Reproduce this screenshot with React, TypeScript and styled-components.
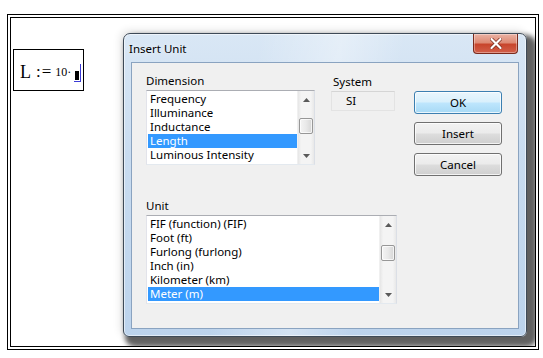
import React from "react";
import styled, { createGlobalStyle } from "styled-components";

const Global = createGlobalStyle`
  html, body { margin: 0; padding: 0; background: #ffffff; }
  body { width: 543px; height: 358px; overflow: hidden; }
  * { box-sizing: border-box; }
`;

const Frame = styled.div`
  margin: 14px 0 0 7px;
  width: 532px;
  height: 336px;
  border: 1px solid #000;
  padding: 2px;
`;

const Sheet = styled.div`
  height: 100%;
  border: 1px solid #000;
  display: flex;
  align-items: flex-start;
  overflow: hidden;
  background: #fff;
`;

const MathBox = styled.div`
  margin: 31px 0 0 2px;
  width: 71px;
  height: 42px;
  border: 1px solid #000;
  display: flex;
  align-items: center;
  padding: 4px 0 0 6px;
  font-family: "Liberation Serif", serif;
  color: #000;
`;

const MathBig = styled.span`
  font-size: 18px;
  line-height: 18px;
`;

const MathSmall = styled.span`
  font-size: 12px;
  line-height: 18px;
  margin-left: 3px;
`;

const Assign = styled.span`
  font-size: 17px;
  line-height: 18px;
  margin-left: 5px;
  letter-spacing: 1px;
`;

const CursorWrap = styled.span`
  display: inline-flex;
  align-items: flex-end;
  margin-left: 3px;
  height: 18px;
  border-right: 1.5px solid #3b3bd6;
  border-bottom: 1.5px solid #3b3bd6;
  padding: 0 1px 1px 1px;
  margin-top: 2px;
`;

const CursorBlock = styled.span`
  display: block;
  width: 4px;
  height: 9px;
  background: #000;
`;

const Window = styled.div`
  margin: 15px 0 0 39px;
  width: 404px;
  height: 304px;
  border: 1px solid #3e4a57;
  border-radius: 7px 7px 6px 6px;
  background:
    linear-gradient(100deg, rgba(255,255,255,0.0) 30%, rgba(255,255,255,0.35) 48%, rgba(255,255,255,0) 62%),
    linear-gradient(180deg, #d9e7f5 0%, #c9dcf0 40%, #bcd3ec 100%);
  box-shadow:
    6px 6px 5px 4px rgba(0, 0, 0, 0.62),
    -2px -2px 8px rgba(0, 0, 0, 0.12),
    inset 0 0 0 1px rgba(255,255,255,0.55);
  display: flex;
  flex-direction: column;
  padding: 0 7px 7px 7px;
`;

const TitleBar = styled.div`
  height: 28px;
  display: flex;
  align-items: flex-start;
  justify-content: space-between;
`;

const TitleText = styled.div`
  font-family: "Noto Sans", "Open Sans", sans-serif;
  font-size: 11.5px;
  color: #000;
  margin: 7px 0 0 -2px;
  text-shadow: 0 0 6px rgba(255,255,255,0.9);
`;

const CloseButton = styled.div`
  width: 45px;
  height: 20px;
  margin-right: 1px;
  border: 1px solid #7a2a1c;
  border-top: none;
  border-radius: 0 0 4px 4px;
  background: linear-gradient(180deg, #eab2a4 0%, #de8a74 45%, #c8452c 55%, #d2604a 100%);
  box-shadow: inset 0 0 0 1px rgba(255,255,255,0.35);
  display: flex;
  align-items: center;
  justify-content: center;
`;

const Client = styled.div`
  flex: 1;
  border: 1px solid #8aa3c0;
  background: #f0f0f0;
  padding: 11px 0 0 14px;
  font-family: "Noto Sans", "Open Sans", sans-serif;
  font-size: 11.5px;
  color: #000;
`;

const TopSection = styled.div`
  display: flex;
  align-items: flex-start;
`;

const Column = styled.div<{ $w: number; $ml?: number; $mt?: number }>`
  width: ${(p) => p.$w}px;
  margin-left: ${(p) => p.$ml ?? 0}px;
  margin-top: ${(p) => p.$mt ?? 0}px;
  display: flex;
  flex-direction: column;
`;

const Label = styled.div<{ $ml?: number }>`
  height: 14px;
  line-height: 14px;
  margin: 0 0 2px ${(p) => p.$ml ?? 0}px;
  white-space: nowrap;
`;

const ListBox = styled.div<{ $w: number; $h: number }>`
  width: ${(p) => p.$w}px;
  height: ${(p) => p.$h}px;
  border: 1px solid #abadb3;
  border-color: #abadb3 #dbdfe6 #e3e9ef #e2e3ea;
  background: #fff;
  display: flex;
`;

const Items = styled.div`
  flex: 1;
  padding: 1px 0 0 1px;
  overflow: hidden;
`;

const Item = styled.div<{ $sel?: boolean }>`
  height: 14px;
  line-height: 14px;
  padding-left: 2px;
  white-space: nowrap;
  background: ${(p) => (p.$sel ? "#3399ff" : "transparent")};
  color: ${(p) => (p.$sel ? "#fff" : "#000")};
`;

const ScrollBar = styled.div`
  width: 17px;
  display: flex;
  flex-direction: column;
  background: linear-gradient(90deg, #e6e6e6 0%, #f4f4f4 20%, #f4f4f4 80%, #e8e8e8 100%);
  border-left: 1px solid #f0f0f0;
`;

const ArrowBtn = styled.div`
  height: 17px;
  display: flex;
  align-items: center;
  justify-content: center;
`;

const Spacer = styled.div`
  flex: 1;
`;

const Thumb = styled.div<{ $mt: number; $h: number }>`
  margin: ${(p) => p.$mt}px 1px 0 1px;
  height: ${(p) => p.$h}px;
  border: 1px solid #979797;
  border-radius: 2px;
  background: linear-gradient(90deg, #f4f4f4 0%, #e9e9e9 50%, #d6d6d6 100%);
  box-shadow: inset 0 0 0 1px rgba(255,255,255,0.7);
`;

const ReadOnlyBox = styled.div`
  width: 64px;
  height: 20px;
  border: 1px solid #dadada;
  border-color: #d5d5d5 #e3e3e3 #e3e3e3 #e3e3e3;
  background: #f0f0f0;
  padding-left: 14px;
  line-height: 17px;
`;

const ButtonStack = styled.div`
  margin: 17px 0 0 19px;
  display: flex;
  flex-direction: column;
  gap: 8px;
`;

const Button = styled.div<{ $default?: boolean }>`
  width: 88px;
  height: 23px;
  border: 1px solid ${(p) => (p.$default ? "#3c7fb1" : "#707070")};
  border-radius: 3px;
  background: ${(p) =>
    p.$default
      ? "linear-gradient(180deg, #eaf6fd 0%, #d9f0fc 48%, #bee6fd 52%, #a7d9f5 100%)"
      : "linear-gradient(180deg, #f2f2f2 0%, #ebebeb 48%, #dddddd 52%, #cfcfcf 100%)"};
  box-shadow: inset 0 0 0 1px rgba(255,255,255,0.75);
  display: flex;
  align-items: center;
  justify-content: center;
  line-height: 14px;
`;

const UnitSection = styled.div`
  margin-top: 23px;
  display: flex;
  flex-direction: column;
`;

const UpArrow = () => (
  <svg width="7" height="4" viewBox="0 0 7 4">
    <path d="M0 4 L3.5 0 L7 4 Z" fill="#5a5a5a" />
  </svg>
);

const DownArrow = () => (
  <svg width="7" height="4" viewBox="0 0 7 4">
    <path d="M0 0 L7 0 L3.5 4 Z" fill="#5a5a5a" />
  </svg>
);

const CloseX = () => (
  <svg width="12" height="11" viewBox="0 0 12 11">
    <path d="M1.5 1 L10.5 10 M10.5 1 L1.5 10" stroke="#7a2a1c" strokeWidth="3.6" strokeLinecap="round" />
    <path d="M1.5 1 L10.5 10 M10.5 1 L1.5 10" stroke="#ffffff" strokeWidth="2.2" strokeLinecap="round" />
  </svg>
);

const dimensions = ["Frequency", "Illuminance", "Inductance", "Length", "Luminous Intensity"];
const units = [
  "FIF (function) (FIF)",
  "Foot (ft)",
  "Furlong (furlong)",
  "Inch (in)",
  "Kilometer (km)",
  "Meter (m)",
];

export default function App() {
  return (
    <>
      <Global />
      <Frame>
        <Sheet>
          <MathBox>
            <MathBig>L</MathBig>
            <Assign>:=</Assign>
            <MathSmall>10·</MathSmall>
            <CursorWrap>
              <CursorBlock />
            </CursorWrap>
          </MathBox>
          <Window>
            <TitleBar>
              <TitleText>Insert Unit</TitleText>
              <CloseButton>
                <CloseX />
              </CloseButton>
            </TitleBar>
            <Client>
              <TopSection>
                <Column $w={169}>
                  <Label>Dimension</Label>
                  <ListBox $w={169} $h={75}>
                    <Items>
                      {dimensions.map((d) => (
                        <Item key={d} $sel={d === "Length"}>
                          {d}
                        </Item>
                      ))}
                    </Items>
                    <ScrollBar>
                      <ArrowBtn>
                        <UpArrow />
                      </ArrowBtn>
                      <Thumb $mt={10} $h={16} />
                      <Spacer />
                      <ArrowBtn>
                        <DownArrow />
                      </ArrowBtn>
                    </ScrollBar>
                  </ListBox>
                </Column>
                <Column $w={64} $ml={16} $mt={1}>
                  <Label $ml={2}>System</Label>
                  <ReadOnlyBox>SI</ReadOnlyBox>
                </Column>
                <ButtonStack>
                  <Button $default>OK</Button>
                  <Button>Insert</Button>
                  <Button>Cancel</Button>
                </ButtonStack>
              </TopSection>
              <UnitSection>
                <Label>Unit</Label>
                <ListBox $w={251} $h={89}>
                  <Items>
                    {units.map((u) => (
                      <Item key={u} $sel={u === "Meter (m)"}>
                        {u}
                      </Item>
                    ))}
                  </Items>
                  <ScrollBar>
                    <ArrowBtn>
                      <UpArrow />
                    </ArrowBtn>
                    <Thumb $mt={12} $h={16} />
                    <Spacer />
                    <ArrowBtn>
                      <DownArrow />
                    </ArrowBtn>
                  </ScrollBar>
                </ListBox>
              </UnitSection>
            </Client>
          </Window>
        </Sheet>
      </Frame>
    </>
  );
}
